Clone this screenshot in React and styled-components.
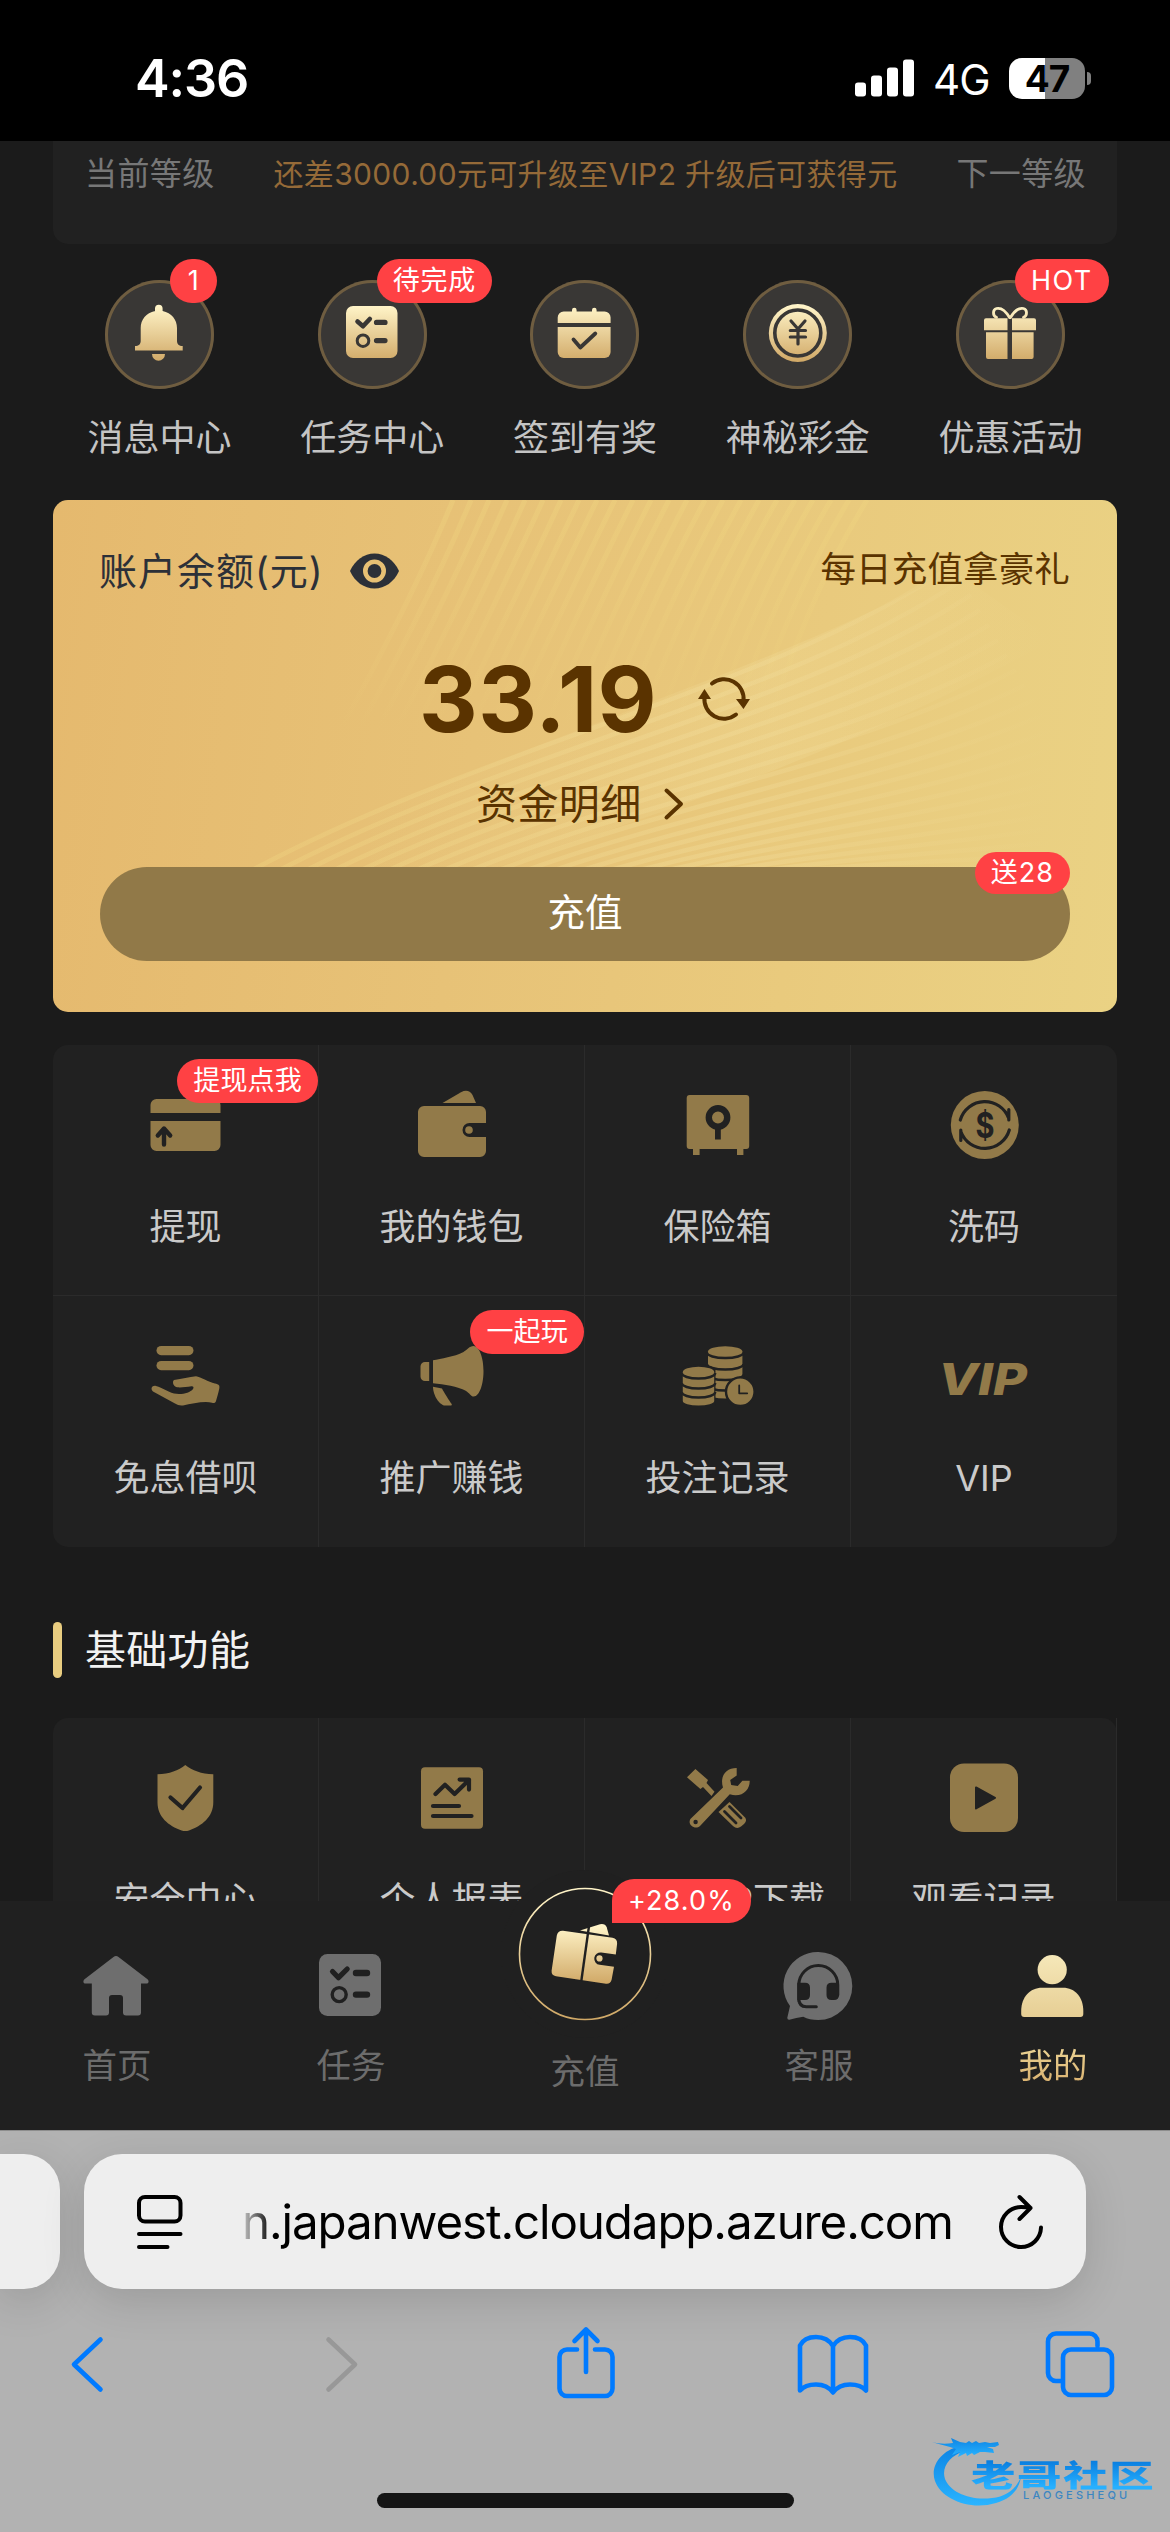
import React from "react";
import styled, { createGlobalStyle } from "styled-components";

const GlobalStyle = createGlobalStyle`
  *, *::before, *::after { box-sizing: border-box; }
  body { margin: 0; background: #000; }
`;

const GOLD = "#927a49";
const CARD = "#212121";
const RED = "#ff4144";

/* ---------- layout ---------- */

const Screen = styled.div`
  width: 1170px;
  height: 2532px;
  position: relative;
  overflow: hidden;
  display: flex;
  flex-direction: column;
  background: #1b1b1b;
  font-family: Inter, "Noto Sans CJK SC", sans-serif;
  svg { display: block; overflow: visible; flex: none; }
`;

const StatusBar = styled.header`
  height: 141px;
  flex: none;
  background: #000;
  color: #fff;
  display: flex;
  justify-content: space-between;
  align-items: center;
  padding: 15px 79px 0 135px;
`;

const Clock = styled.span`
  font-size: 52px;
  font-weight: 600;
  letter-spacing: -1.1px;
`;

const StatusRight = styled.div`
  display: flex;
  align-items: center;
`;

const Network = styled.span`
  font-size: 42px;
  margin: 3px 18px 0 19px;
  width: 58px;
  letter-spacing: -1px;
  line-height: 50px;
`;

const Battery = styled.div`
  width: 76px;
  height: 41px;
  border-radius: 13px;
  background: linear-gradient(90deg, #fff 47%, #808080 47%);
  color: #000;
  font-size: 37px;
  font-weight: 700;
  line-height: 41px;
  text-align: center;
  letter-spacing: -1px;
`;

const BatteryTip = styled.div`
  width: 4px;
  height: 13px;
  margin-left: 2px;
  border-radius: 0 4px 4px 0;
  background: #808080;
`;

const Content = styled.main`
  height: 1760px;
  flex: none;
  overflow: hidden;
  padding: 0 53px;
`;

const LevelCard = styled.section`
  height: 103px;
  background: ${CARD};
  border-radius: 0 0 15px 15px;
  padding: 10px 31px 0 32px;
  display: flex;
  justify-content: space-between;
  line-height: 46px;
  font-size: 32px;
  letter-spacing: 0.4px;
  color: #777;
`;

const LevelHint = styled.span`
  color: #956a38;
  font-size: 30px;
  letter-spacing: 0.35px;
`;

const QuickRow = styled.nav`
  height: 256px;
  padding-top: 36px;
  display: grid;
  grid-template-columns: repeat(5, 1fr);
`;

const QuickItem = styled.div`
  display: flex;
  flex-direction: column;
  align-items: center;
`;

const QuickCircle = styled.div`
  position: relative;
  width: 109px;
  height: 109px;
  border-radius: 50%;
  background: #393735;
  box-shadow: inset 0 0 0 3px #6f5d40;
`;

const QuickLabel = styled.span`
  margin-top: 28px;
  font-size: 36px;
  line-height: 42px;
  color: #c4c4c4;
  white-space: nowrap;
`;

const Badge = styled.span`
  position: absolute;
  z-index: 2;
  height: ${(p) => p.$h || 44}px;
  line-height: ${(p) => p.$h || 44}px;
  padding: 0 16px;
  border-radius: 22px;
  background: ${RED};
  color: #fff;
  font-size: 27px;
  letter-spacing: ${(p) => p.$track || 0.2}px;
  white-space: nowrap;
  text-align: center;
`;

const QuickBadge = styled(Badge)`
  left: ${(p) => p.$left}px;
  top: -21px;
  min-width: 47px;
`;

/* ---------- balance ---------- */

const BalanceCard = styled.section`
  position: relative;
  height: 512px;
  border-radius: 15px;
  overflow: hidden;
  background: linear-gradient(97deg, #e5b96e 0%, #e7c277 40%, #e9ca7d 70%, #ead284 100%);
  padding: 0 47px;
  color: #5a3300;
`;

const Decor = styled.div`
  position: absolute;
  inset: 0;
`;

const BalanceInner = styled.div`
  position: relative;
  display: flex;
  flex-direction: column;
`;

const BalanceTop = styled.div`
  height: 142px;
  display: flex;
  justify-content: space-between;
  align-items: center;
`;

const AccountTitle = styled.div`
  display: flex;
  align-items: center;
  gap: 26px;
  font-size: 38px;
  letter-spacing: 1px;
  color: #2c3038;
  span { margin: -6px 0 0 -1px; }
`;

const Promo = styled.span`
  font-size: 35.5px;
  letter-spacing: 0.15px;
  line-height: 44px;
  padding-bottom: 2px;
`;

const AmountRow = styled.div`
  height: 114px;
  display: flex;
  align-items: center;
  padding-left: 319px;
  gap: 43px;
`;

const Amount = styled.span`
  font-size: 91px;
  font-weight: 700;
  line-height: 114px;
  letter-spacing: 0.4px;
  width: 236px;
  white-space: nowrap;
`;

const DetailRow = styled.div`
  height: 96px;
  display: flex;
  align-items: center;
  padding-left: 376px;
  gap: 22px;
  font-size: 41px;
  letter-spacing: 0.4px;
  span { margin-top: -6px; }
`;

const RechargeButton = styled.div`
  position: relative;
  margin-top: 15px;
  height: 94px;
  border-radius: 47px;
  background: #917948;
  color: #fff;
  font-size: 37.5px;
  line-height: 92px;
  text-align: center;
`;

const RechargeBadge = styled(Badge)`
  right: 0;
  top: -15px;
`;

/* ---------- feature grids ---------- */

const FeatureGrid = styled.section`
  display: grid;
  grid-template-columns: repeat(4, 1fr);
  grid-auto-rows: 251px;
  margin-top: ${(p) => p.$mt}px;
  border-radius: 15px;
  background: ${CARD};
`;

const Feature = styled.div`
  position: relative;
  display: flex;
  flex-direction: column;
  align-items: center;
  padding-top: 44px;
  border-right: ${(p) => (p.$right ? "1px solid #2b2b2b" : "0")};
  border-bottom: ${(p) => (p.$bottom ? "1px solid #2b2b2b" : "0")};
`;

const FeatureLabel = styled.span`
  margin-top: 44px;
  font-size: 36px;
  line-height: 44px;
  color: #cacaca;
  white-space: nowrap;
`;

const FeatureBadge = styled(Badge)`
  right: 0;
  top: 14px;
`;

const SectionTitle = styled.h2`
  margin: 75px 0 0;
  height: 56px;
  display: flex;
  align-items: center;
  gap: 23px;
  font-size: 41px;
  font-weight: 400;
  letter-spacing: 0.3px;
  line-height: 56px;
  color: #f2f2f2;
  &::before {
    content: "";
    width: 9px;
    height: 56px;
    border-radius: 5px;
    background: #e9cd80;
  }
`;

/* ---------- tab bar ---------- */

const TabBar = styled.nav`
  position: relative;
  height: 229px;
  flex: none;
  background: #202020;
  display: grid;
  grid-template-columns: repeat(5, 1fr);
`;

const Tab = styled.div`
  display: flex;
  flex-direction: column;
  align-items: center;
  padding-top: 50px;
  font-size: 34.5px;
  line-height: 42px;
  color: #6c6c6c;
  gap: 24px;
`;

const ActiveLabel = styled.span`
  background: linear-gradient(180deg, #ecd596, #d8ae6c);
  -webkit-background-clip: text;
  background-clip: text;
  color: transparent;
`;

const CenterTab = styled.div`
  display: flex;
  justify-content: center;
  align-items: flex-end;
  padding-bottom: 37px;
  font-size: 34.5px;
  line-height: 42px;
  color: #6c6c6c;
`;

const Hump = styled.div`
  position: absolute;
  left: 501px;
  top: -31px;
  width: 168px;
  height: 168px;
  padding: 18px;
  border-radius: 50%;
  background: #202020;
`;

const HumpBadge = styled(Badge)`
  left: 111px;
  top: 9px;
  border-bottom-left-radius: 0;
`;

/* ---------- browser chrome ---------- */

const Chrome = styled.footer`
  position: relative;
  flex: 1;
  background: #b2b2b2;
  border-top: 1px solid #8d8d8d;
  overflow: hidden;
`;

const AddressRow = styled.div`
  display: flex;
  gap: 24px;
  padding-top: 23px;
`;

const pillShadow = "0 12px 44px rgba(0,0,0,0.13)";

const PrevPill = styled.div`
  width: 60px;
  height: 135px;
  border-radius: 0 36px 36px 0;
  background: #eee;
  box-shadow: ${pillShadow};
`;

const AddressPill = styled.div`
  width: 1002px;
  height: 135px;
  border-radius: 38px;
  background: #eee;
  box-shadow: ${pillShadow};
  display: flex;
  align-items: center;
  padding: 0 43px 0 53px;
`;

const Url = styled.span`
  margin-left: 59px;
  width: 716px;
  margin-right: 41px;
  font-size: 47.5px;
  letter-spacing: -1.1px;
  line-height: 60px;
  color: #000;
  white-space: nowrap;
  -webkit-mask-image: linear-gradient(90deg, rgba(0,0,0,0.15) 0, #000 30px);
  mask-image: linear-gradient(90deg, rgba(0,0,0,0.15) 0, #000 30px);
`;

const ToolRow = styled.div`
  margin-top: 33px;
  display: grid;
  grid-template-columns: 173px 337px 151px 343px 151px;
  justify-items: center;
`;

const HomeIndicator = styled.div`
  width: 417px;
  height: 15px;
  border-radius: 8px;
  background: #151515;
  margin: 91px auto 0;
`;

const Watermark = styled.div`
  position: absolute;
  left: 932px;
  top: 2437px;
  width: 222px;
  height: 70px;
`;

const WatermarkName = styled.span`
  position: absolute;
  left: 39px;
  top: 18px;
  font: 900 38px/38px "Noto Sans CJK SC", sans-serif;
  letter-spacing: 1.4px;
  transform-origin: 0 50%;
  transform: scale(1.17, 0.82);
  white-space: nowrap;
  background: linear-gradient(180deg, #0a7fe0 10%, #27b0ff 90%);
  -webkit-background-clip: text;
  background-clip: text;
  color: transparent;
`;

const WatermarkSub = styled.span`
  position: absolute;
  left: 91px;
  top: 54px;
  font-size: 11px;
  font-weight: 500;
  line-height: 9px;
  letter-spacing: 3.2px;
  color: #3c86c2;
  white-space: nowrap;
`;

/* ---------- icons ---------- */

const HiddenDefs = styled.svg`
  position: absolute;
`;

const Gradients = () => (
  <HiddenDefs width="0" height="0">
    <defs>
      <linearGradient id="gold" gradientUnits="userSpaceOnUse" x1="0" y1="26" x2="0" y2="82">
        <stop offset="0" stopColor="#fff4c8" />
        <stop offset="1" stopColor="#d0a866" />
      </linearGradient>
      <linearGradient id="goldWallet" gradientUnits="userSpaceOnUse" x1="0" y1="38" x2="0" y2="96">
        <stop offset="0" stopColor="#fff4c8" />
        <stop offset="1" stopColor="#d0a866" />
      </linearGradient>
      <linearGradient id="goldRing" x1="0" y1="0" x2="0" y2="1">
        <stop offset="0" stopColor="#fff4c8" />
        <stop offset="1" stopColor="#d0a866" />
      </linearGradient>
      <linearGradient id="goldUser" gradientUnits="userSpaceOnUse" x1="0" y1="0" x2="0" y2="70">
        <stop offset="0" stopColor="#f6e9bb" />
        <stop offset="1" stopColor="#e6cd92" />
      </linearGradient>
      <linearGradient id="blue" x1="0" y1="0" x2="0" y2="1">
        <stop offset="0" stopColor="#0c84e4" />
        <stop offset="1" stopColor="#2ab4ff" />
      </linearGradient>
    </defs>
  </HiddenDefs>
);

const DK = "#393735";
const Q = ({ children }) => (
  <svg width="109" height="109" viewBox="0 0 109 109" fill="url(#gold)">{children}</svg>
);
const line = (stroke, w) => ({ fill: "none", stroke, strokeWidth: w, strokeLinecap: "round", strokeLinejoin: "round" });

const Bell = () => (
  <Q>
    <path d="M50 32V28.5a3.8 3.8 0 0 1 7.6 0V31C66.500 33 72 39.500 72 48v13c0 3 2 5 5.700 5v4.600H30V66c3.700 0 5.700-2 5.700-5V48c0-8.500 5.500-15 14.300-17z" />
    <path d="M47 74h13a6.500 6.800 0 0 1-13 0z" />
  </Q>
);
const TaskGold = () => (
  <Q>
    <rect x="28" y="26" width="51.500" height="52" rx="7" />
    <path d="M39.500 41.500l5.500 4.800 6.800-7.300" {...line(DK, 4.6)} />
    <path d="M58.500 42.400H67M58.500 60.600H67" {...line(DK, 5.2)} />
    <circle cx="45" cy="60.700" r="5.800" {...line(DK, 3)} />
  </Q>
);
const CalendarGold = () => (
  <Q>
    <path d="M27.700 43v-5.500a6 6 0 0 1 6-6H42V30a2.300 2.300 0 0 1 4.600 0v1.500H62V30a2.300 2.300 0 0 1 4.600 0v1.500h8a6 6 0 0 1 6 6V43z" />
    <path d="M27.700 47h52.900v25a6 6 0 0 1-6 6H33.700a6 6 0 0 1-6-6z" />
    <path d="M43.500 59.500l6.800 8 15-14" {...line(DK, 3.8)} />
  </Q>
);
const YuanGold = () => (
  <Q>
    <circle cx="54.800" cy="53" r="29" />
    <circle cx="54.800" cy="53" r="23" {...line(DK, 3.6)} />
    <path d="M48 41l7 8 7-8M55 49v15M47.300 50.500h15.200M47.300 57h15.200" {...line(DK, 3.2)} />
  </Q>
);
const GiftGold = () => (
  <Q>
    <path d="M30 38.300h21.500v12H28v-10a2 2 0 0 1 2-2zM56 38.300h22a2 2 0 0 1 2 2v10H56zM30 52.300h21.500V79H32a2 2 0 0 1-2-2zM56 52.300h21.600V77a2 2 0 0 1-2 2H56z" />
    <path d="M53.500 37.500C50 31.500 45 27.500 40.500 28.500c-4 1-4 7.500 0 8.800M54.500 37.500c3.500-6 8.500-10 13-9 4 1 4 7.500 0 8.800" {...line("url(#gold)", 2.8)} />
  </Q>
);

const G = ({ children }) => (
  <svg width="72" height="72" viewBox="0 0 72 72" fill={GOLD}>{children}</svg>
);

const Withdraw = () => (
  <G>
    <path d="M.5 24v-8a6 6 0 0 1 6-6h58a6 6 0 0 1 6 6v8zM.5 32h70v24a6 6 0 0 1-6 6h-58a6 6 0 0 1-6-6z" />
    <path d="M14 55.500V40M7.800 46.500L14 39.500l6.200 7" {...line(CARD, 4.4)} />
  </G>
);
const Wallet = () => (
  <G>
    <path d="M8 17h56a6 6 0 0 1 6 6v11H53.500a7 7 0 0 0 0 14H70v14a6 6 0 0 1-6 6H8a6 6 0 0 1-6-6V23a6 6 0 0 1 6-6z" />
    <circle cx="53" cy="41" r="3.800" />
    <path d="M26.500 14L45 3.200Q52.500-.5 56.500 6L60 14z" />
  </G>
);
const Safe = () => (
  <G>
    <rect x="4.700" y="6" width="62.500" height="54" rx="3" />
    <path d="M11 59h6.600v7H11zM55 59h6.400v7H55z" />
    <path d="M33 38h5.800v12.500H33z" fill={CARD} />
    <circle cx="36" cy="28.500" r="9.200" fill={GOLD} stroke={CARD} strokeWidth="6.400" />
  </G>
);
const CoinCycle = () => (
  <G>
    <circle cx="36.800" cy="36" r="34" />
    <path d="M12.300 31a25.500 25.500 0 0 1 48.500-1.500M60.800 31V20.500M61.300 41a25.500 25.500 0 0 1-48.500 1.500M12.800 41v10.500" {...line(CARD, 3.2)} />
    <text x="27.500" y="48.600" fontFamily="Inter" fontWeight="700" fontSize="35" textLength="19" lengthAdjust="spacingAndGlyphs" fill={CARD}>$</text>
  </G>
);
const HandLoan = () => (
  <G>
    <rect x="6.500" y="6" width="37" height="9.200" rx="4.600" />
    <rect x="6.500" y="21" width="37" height="9.200" rx="4.600" />
    <path d="M3 51.500C0 49 2 45 6 46c7 2 11 5.500 18 7.600 8 1.200 16-.6 19-4.600 1-1.600.5-2.800-1.500-2.700C36 47.200 31 47.600 27 47.300c-4-.6-5-6-3-7.300 8-1 15-3.200 22-3.800 5 1 12 5.500 19 7.300 3.500.9 5 1.500 4.300 5-1 5-2.300 9-3.300 12.500-.6 2-2 2.300-4 1.800-7-2-20 .8-29 2.600-3 .4-5.500-.3-8-1.800z" />
  </G>
);
const Megaphone = () => (
  <G>
    <path d="M13.200 22v19H9a4.500 4.500 0 0 1-4.500-4.500v-10A4.500 4.500 0 0 1 9 22z" />
    <path d="M17 20.300c8-1.800 21-3.300 30.500-8.300C51 9.800 53.500 6 57.500 6c6 0 10 12 10 25s-4 25.500-9.800 25.500c-3 0-4-3.500-8-5.800C42 46.500 28 44.500 17 43.300z" />
    <path d="M17 46.700l9 1.700c1.500 3 7.500 12.600 9.700 15.600.3 1-.2 1.600-1.200 1.600h-5C23.500 65.600 17 55 17 46.700z" />
  </G>
);

const Stack = ({ x, w, ys, bottom }) => {
  const r = w / 2;
  return (
    <>
      <path d={`M${x} ${ys[0]}a${r} 5.200 0 0 1 ${w} 0V${bottom}a${r} 4.500 0 0 1 ${-w} 0z`} fill={GOLD} />
      {ys.map((y) => (
        <path key={y} d={`M${x - 1} ${y + 1}a${r + 1} 5.600 0 0 0 ${w + 2} 0`} fill="none" stroke={CARD} strokeWidth="2.500" />
      ))}
    </>
  );
};
const CoinsClock = () => (
  <G>
    <Stack x={26} w={34.4} ys={[11.5, 23, 33.5, 44]} bottom={54} />
    <path d="M-1 33a17 6 0 0 1 34.500-4V66H-1z" fill={CARD} />
    <Stack x={0.8} w={31.4} ys={[32, 42, 51]} bottom={61} />
    <circle cx="58.300" cy="51.700" r="14.300" fill={GOLD} stroke={CARD} strokeWidth="2.400" />
    <path d="M57.200 45.500v7.800h8" {...line(CARD, 1.8)} />
  </G>
);
const VipMark = () => (
  <G>
    <text x="-10" y="54.500" fontFamily="Inter" fontStyle="italic" fontWeight="800" fontSize="44" textLength="89" lengthAdjust="spacingAndGlyphs">VIP</text>
  </G>
);
const Shield = () => (
  <G>
    <path d="M35.300 3c7 5.500 16 9 28 9.300v28C63.300 55 52 64 39 68.400q-3.700 1-7.400 0C18.600 64 7.500 55 7.500 40.300v-28c12-.3 21-3.800 27.800-9.300z" />
    <path d="M20.500 35.500l12 10.500L50 25.500" {...line(CARD, 4.2)} />
  </G>
);
const Report = () => (
  <G>
    <rect x="5" y="5.300" width="62" height="61.500" rx="4" />
    <path d="M19.500 32l9.500-9.200 9.600 9.200L53 18M43.600 17.600H53v10M17 44h26M17 54h38.500" {...line(CARD, 4.2)} />
  </G>
);
const Tools = () => (
  <G>
    <path d="M13.400 7L26 18l-1.500 3 8 8.700-3 4.300-8.500-9-2.600 2L5 15.300z" />
    <path d="M54.700 6v7.500l-6.500 4.500 1 5 6.500 1 4.700-5.300h7.300C68 28 60 36 47.800 32.300L18 64c-5 4.500-13-1.500-9.600-7L41 25.500C37.500 14 44 6 54.700 6z" />
    <circle cx="13.600" cy="60" r="2.200" fill={CARD} />
    <path d="M47.500 40L63 55.500q2.500 3-1 6.500l-3 2.500q-4 3-8-.5L36.500 50z" strokeLinejoin="round" />
    <path d="M42.500 49.500L54 61M47.500 44.500L59 56" {...line(CARD, 2.8)} />
  </G>
);
const PlayBox = () => (
  <G>
    <rect x="2" y="1.500" width="68" height="68.500" rx="14" />
    <path d="M28 25.500l19 10.300-19 10.700z" fill={CARD} stroke={CARD} strokeWidth="2" strokeLinejoin="round" />
  </G>
);

const T = ({ fill = "#6e6e6e", children }) => (
  <svg width="70" height="70" viewBox="0 0 70 70" fill={fill}>{children}</svg>
);
const HomeIcon = () => (
  <T>
    <path d="M31.500 6q2.500-2 5 0L65.500 28.300c2 2 1 4.300-1 4.300H59V61.500a3 3 0 0 1-3 3H44a3 3 0 0 1-3-3V47a3 3 0 0 0-3-3h-8a3 3 0 0 0-3 3v14.500a3 3 0 0 1-3 3H12.800a3 3 0 0 1-3-3V32.600H3.500c-2 0-3-2.300-1-4.300z" />
  </T>
);
const TaskIcon = () => (
  <T>
    <rect x="3" y="3" width="62" height="62" rx="8.500" />
    <path d="M16.500 20.500l6 6.200 8.700-8.700" {...line("#202020", 5.2)} />
    <path d="M40 22h11M40 43.600h11" {...line("#202020", 6.4)} />
    <circle cx="23.200" cy="43.600" r="7" {...line("#202020", 3.4)} />
  </T>
);
const ServiceIcon = () => (
  <T>
    <path d="M34.300 1a34 34 0 1 1 0 68q-9 0-15-3.200-7 1.200-14 3-2 .2-2-2L6 55A34 34 0 0 1 34.300 1z" />
    <path d="M14.800 50V34a19.500 19.500 0 0 1 39 0v10M14.800 47c0 6 2.500 8.800 7.500 8.800h10" {...line("#202020", 3)} />
    <path d="M13.300 31.700H21q5 0 5 5V44q0 5-5 5h-7.700zM55 31.700h-7.500q-5 0-5 5V44q0 5 5 5h2.500q5 0 5-5z" fill="#202020" />
  </T>
);
const UserIcon = () => (
  <T fill="url(#goldUser)">
    <circle cx="34.200" cy="18.700" r="14.600" />
    <path d="M24 36.700h21C57 36.700 65.300 46 65.300 60v3a3 3 0 0 1-3 3H6.200a3 3 0 0 1-3-3v-3C3.200 46 12 36.700 24 36.700z" />
  </T>
);
const WalletRing = () => (
  <svg width="133" height="133" viewBox="0 0 133 133" fill="url(#goldWallet)">
    <circle cx="66" cy="66" r="65.500" fill="none" stroke="url(#goldRing)" strokeWidth="1.600" />
    <path d="M61 42.500l20-6.300q5-1 6.700 3l2.300 8.200z" />
    <path d="M44 42.800L93.500 49.800q5 1 4.600 6l-1.300 10.700-14.500-2a6.200 6.200 0 0 0-1.700 12.300l14.400 2-2.400 13q-1.200 4.500-5.600 4L37 88.300q-4.800-1-4.400-5.500l5.200-35.300q1-5 6.200-4.700z" />
    <circle cx="80.500" cy="70.400" r="3.100" />
    <path d="M70 38L62.300 93" stroke="#202020" strokeWidth="2.400" />
  </svg>
);

const waves = Array.from({ length: 24 }, (_, i) => i);
const CardWaves = () => (
  <svg width="1064" height="512" viewBox="0 0 1064 512" fill="none">
    <defs>
      <linearGradient id="fadeDown" gradientUnits="userSpaceOnUse" x1="0" y1="0" x2="0" y2="230">
        <stop offset="0" stopColor="#f0d680" stopOpacity=".36" />
        <stop offset="1" stopColor="#f0d680" stopOpacity="0" />
      </linearGradient>
      <linearGradient id="fadeSide" gradientUnits="userSpaceOnUse" x1="190" y1="0" x2="1000" y2="0">
        <stop offset="0" stopColor="#f0d680" stopOpacity=".34" />
        <stop offset=".6" stopColor="#f3e0a0" stopOpacity=".32" />
        <stop offset="1" stopColor="#f3e0a0" stopOpacity="0" />
      </linearGradient>
      <linearGradient id="glow" gradientUnits="userSpaceOnUse" x1="300" y1="0" x2="1000" y2="0">
        <stop offset="0" stopColor="#f5e4a4" stopOpacity="0" />
        <stop offset=".6" stopColor="#f5e4a4" stopOpacity=".2" />
        <stop offset="1" stopColor="#f5e4a4" stopOpacity="0" />
      </linearGradient>
    </defs>
    {waves.map((i) => (
      <path key={`a${i}`} d={`M${400 + i * 18} 0Q${355 + i * 17} 110 ${265 + i * 19} 270`} stroke="url(#fadeDown)" strokeWidth="5" />
    ))}
    <path d="M190 375C430 250 700 180 900 70L1000 140C800 250 620 310 420 375z" fill="url(#glow)" />
    {waves.map((i) => (
      <path key={`b${i}`} d={`M${190 + i * 27} 375C${430 + i * 22} ${245 + i * 6} ${720 + i * 12} ${190 + i * 9} ${900 + i * 9} ${65 + i * 15}`} stroke="url(#fadeSide)" strokeWidth="4.500" />
    ))}
  </svg>
);

const Eye = () => (
  <svg width="49" height="36" viewBox="0 0 49 36">
    <path d="M0 18C5 7 14 .5 24.500 .5S44 7 49 18C44 29 35 35.500 24.500 35.500S5 29 0 18z" fill="#2c3038" />
    <circle cx="24.500" cy="18" r="9.200" fill="#2c3038" stroke="#e7c074" strokeWidth="4.600" />
  </svg>
);
const Refresh = () => (
  <svg width="52" height="44" viewBox="0 0 52 44">
    <path d="M14 6.500A19.500 19.500 0 0 1 45.500 24M38 37.500A19.500 19.500 0 0 1 6.500 20" {...line("#5a3300", 4)} />
    <path d="M0 22L6.500 12 13 22zM38 22h14l-6.500 10z" fill="#5a3300" />
  </svg>
);
const ChevronDark = () => (
  <svg width="20" height="32" viewBox="0 0 20 32">
    <path d="M2.500 2.500L17 16 2.500 29.500" {...line("#5a3300", 4)} />
  </svg>
);

const Signal = () => (
  <svg width="59" height="38" viewBox="0 0 59 38" fill="#fff">
    <rect x="0" y="23.500" width="11" height="14" rx="3" />
    <rect x="16" y="16.500" width="11" height="21" rx="3" />
    <rect x="32" y="8.500" width="11" height="29" rx="3" />
    <rect x="48" y=".5" width="11" height="37" rx="3" />
  </svg>
);

const ReaderIcon = () => (
  <svg width="46" height="54" viewBox="0 0 46 54">
    <rect x="2" y="2" width="41.500" height="24.500" rx="6" {...line("#000", 4)} />
    <path d="M2 39h41.500M2 52h28.500" {...line("#000", 4)} />
  </svg>
);
const ReloadIcon = () => (
  <svg width="44" height="54" viewBox="0 0 44 54">
    <path d="M42 32.500A20 20 0 1 1 22 12q5 0 9.500 1M20.500 2l11 11-11 11" {...line("#000", 4)} />
  </svg>
);

const IOS = "#007aff";
const Tool = ({ w, stroke = IOS, d }) => (
  <svg width={w} height="80" viewBox={`0 0 ${w} 80`}>
    <path d={d} {...line(stroke, 4.6)} />
  </svg>
);

const Dragon = () => (
  <svg width="100" height="70" viewBox="0 0 100 70" fill="url(#blue)">
    <path d="M28 9C8 14-2 30 3 44 9 62 38 74 64 66c14-4 23-13 25-26C84 52 74 60 60 61 38 64 18 55 13 42 9 30 18 19 32 14z" />
    <path d="M0 5c7 2 14 2 21 1l-2-5 9 4 6 1 3-2 3 2 4-2 3 2 6-1 5 1 8-1 1 3-4 2-8 0 6 2 1 4-9-1-5 0-6 3-2-2-5 3-1-3-8 4 2-5-8 3 4-6-6-2C12 8 5 7 0 5z" />
  </svg>
);

/* ---------- data ---------- */

const quick = [
  { label: "消息中心", Icon: Bell, badge: "1", left: 65 },
  { label: "任务中心", Icon: TaskGold, badge: "待完成", left: 59, track: 0.8 },
  { label: "签到有奖", Icon: CalendarGold },
  { label: "神秘彩金", Icon: YuanGold },
  { label: "优惠活动", Icon: GiftGold, badge: "HOT", left: 59, track: 1.4 },
];

const wallet = [
  { label: "提现", Icon: Withdraw, badge: "提现点我" },
  { label: "我的钱包", Icon: Wallet },
  { label: "保险箱", Icon: Safe },
  { label: "洗码", Icon: CoinCycle },
  { label: "免息借呗", Icon: HandLoan },
  { label: "推广赚钱", Icon: Megaphone, badge: "一起玩" },
  { label: "投注记录", Icon: CoinsClock },
  { label: "VIP", Icon: VipMark },
];

const basics = [
  { label: "安全中心", Icon: Shield },
  { label: "个人报表", Icon: Report },
  { label: "全站APP下载", Icon: Tools },
  { label: "观看记录", Icon: PlayBox },
];

const Features = ({ items, mt, lastRight }) => (
  <FeatureGrid $mt={mt}>
    {items.map(({ label, Icon, badge }, i) => (
      <Feature key={label} $right={lastRight || i % 4 !== 3} $bottom={i < items.length - 4}>
        <Icon />
        <FeatureLabel>{label}</FeatureLabel>
        {badge && <FeatureBadge>{badge}</FeatureBadge>}
      </Feature>
    ))}
  </FeatureGrid>
);

export default function App() {
  return (
    <Screen>
      <GlobalStyle />
      <Gradients />
      <StatusBar>
        <Clock>4:36</Clock>
        <StatusRight>
          <Signal />
          <Network>4G</Network>
          <Battery>47</Battery>
          <BatteryTip />
        </StatusRight>
      </StatusBar>

      <Content>
        <LevelCard>
          <span>当前等级</span>
          <LevelHint>还差3000.00元可升级至VIP2 升级后可获得元</LevelHint>
          <span>下一等级</span>
        </LevelCard>

        <QuickRow>
          {quick.map(({ label, Icon, badge, left, track }) => (
            <QuickItem key={label}>
              <QuickCircle>
                <Icon />
                {badge && <QuickBadge $left={left} $track={track}>{badge}</QuickBadge>}
              </QuickCircle>
              <QuickLabel>{label}</QuickLabel>
            </QuickItem>
          ))}
        </QuickRow>

        <BalanceCard>
          <Decor><CardWaves /></Decor>
          <BalanceInner>
            <BalanceTop>
              <AccountTitle><span>账户余额(元)</span><Eye /></AccountTitle>
              <Promo>每日充值拿豪礼</Promo>
            </BalanceTop>
            <AmountRow>
              <Amount>33.19</Amount>
              <Refresh />
            </AmountRow>
            <DetailRow><span>资金明细</span><ChevronDark /></DetailRow>
            <RechargeButton>
              充值
              <RechargeBadge $h={42} $track={1}>送28</RechargeBadge>
            </RechargeButton>
          </BalanceInner>
        </BalanceCard>

        <Features items={wallet} mt={33} />
        <SectionTitle>基础功能</SectionTitle>
        <Features items={basics} mt={40} lastRight />
      </Content>

      <TabBar>
        <Hump>
          <WalletRing />
          <HumpBadge $track={1.1}>+28.0%</HumpBadge>
        </Hump>
        <Tab><HomeIcon />首页</Tab>
        <Tab><TaskIcon />任务</Tab>
        <CenterTab>充值</CenterTab>
        <Tab><ServiceIcon />客服</Tab>
        <Tab><UserIcon /><ActiveLabel>我的</ActiveLabel></Tab>
      </TabBar>

      <Chrome>
        <AddressRow>
          <PrevPill />
          <AddressPill>
            <ReaderIcon />
            <Url>n.japanwest.cloudapp.azure.com</Url>
            <ReloadIcon />
          </AddressPill>
        </AddressRow>
        <ToolRow>
          <Tool w={32} d="M29.500 17.500L3 42.500l26.500 25" />
          <Tool w={32} stroke="#989898" d="M2.500 17.500L29 42.500 2.500 67.500" />
          <Tool w={58} d="M20 27.500H10a7.500 7.500 0 0 0-7.500 7.500v31.500A7.500 7.500 0 0 0 10 74h38a7.500 7.500 0 0 0 7.500-7.500V35a7.500 7.500 0 0 0-7.500-7.500H38M29 50V7.500M17.500 19L29 7.500 40.500 19" />
          <Tool w={72} d="M36 24C32 17.500 26 15 19 15S6 17.500 3 23.500v45C6 65 12 62.500 19 62.500S32 65 36 70.500C40 65 46 62.500 53 62.500S66 65 69 68.500v-45C66 17.500 60 15 53 15S40 17.500 36 24zV70" />
          <Tool w={68} d="M15 59H10a8 8 0 0 1-8-8V19.500a8 8 0 0 1 8-8h33.500a8 8 0 0 1 8 8V24M25 27.500h33a8 8 0 0 1 8 8V65a8 8 0 0 1-8 8H25a8 8 0 0 1-8-8V35.500a8 8 0 0 1 8-8z" />
        </ToolRow>
        <HomeIndicator />
      </Chrome>

      <Watermark>
        <Dragon />
        <WatermarkName>老哥社区</WatermarkName>
        <WatermarkSub>LAOGESHEQU</WatermarkSub>
      </Watermark>
    </Screen>
  );
}
